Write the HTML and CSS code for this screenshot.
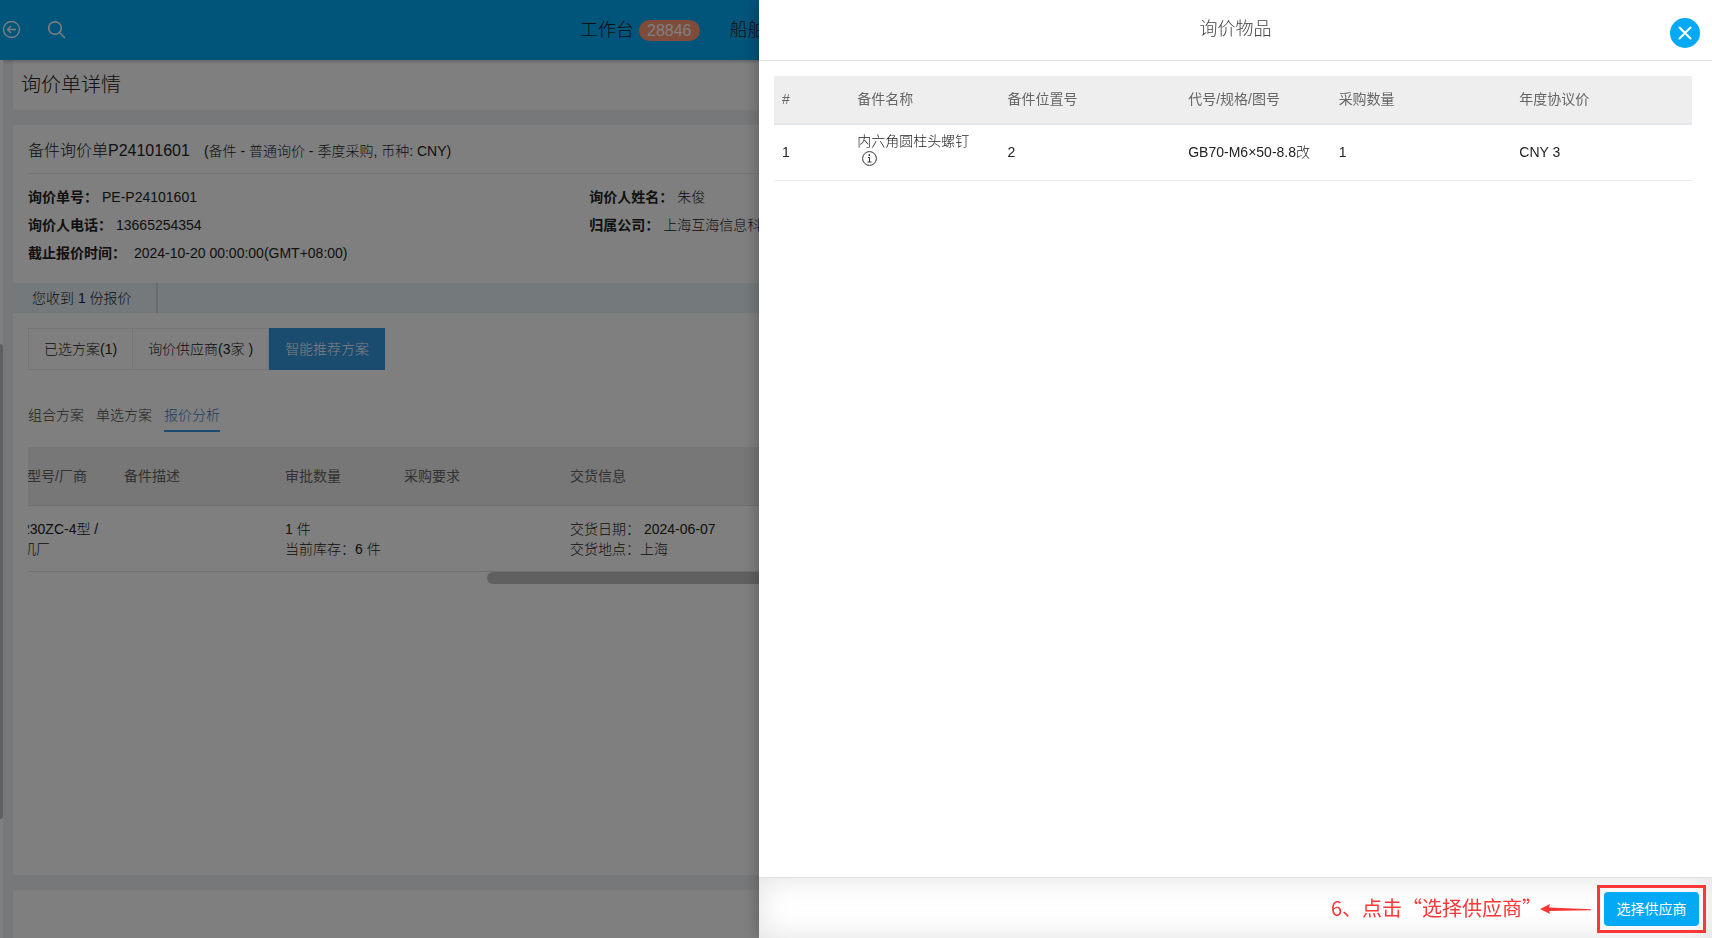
FILE: index.html
```html
<!DOCTYPE html>
<html lang="zh-CN">
<head>
<meta charset="utf-8">
<meta name="viewport" content="width=device-width, initial-scale=1">
<title>询价单详情</title>
<link rel="stylesheet" href="styles.css">
</head>
<body>
<div class="page">
  <header class="topbar">
    <div class="topbar-tools">
      <button class="icon-btn" type="button" aria-label="返回">
        <svg width="18" height="18" viewBox="0 0 18 18" fill="none" stroke="currentColor" stroke-width="1.3"><circle cx="8.500" cy="8.500" r="8"/><path d="M13 8.500H4.500M8 5L4.500 8.500 8 12"/></svg>
      </button>
      <button class="icon-btn" type="button" aria-label="搜索">
        <svg width="18" height="18" viewBox="0 0 18 18" fill="none" stroke="currentColor" stroke-width="1.5"><circle cx="7" cy="7" r="6.300"/><path d="M11.500 11.500l5.500 5.500"/></svg>
      </button>
    </div>
    <nav class="topnav">
      <a class="nav-link" href="#">工作台<span class="badge">28846</span></a>
      <a class="nav-link" href="#">船舶</a>
    </nav>
  </header>

  <div class="body">
    <div class="rail"><div class="rail-thumb"></div></div>
    <main class="main">
      <section class="card title-card"><h1 class="page-title">询价单详情</h1></section>

      <section class="card detail-card">
        <h2 class="order-title">备件询价单P24101601<span class="order-meta">(备件 - 普通询价 - 季度采购, 币种: CNY)</span></h2>
        <dl class="fields">
          <div class="field"><dt>询价单号：</dt><dd>PE-P24101601</dd></div>
          <div class="field"><dt>询价人姓名：</dt><dd>朱俊</dd></div>
          <div class="field"></div>
          <div class="field"><dt>询价人电话：</dt><dd>13665254354</dd></div>
          <div class="field"><dt>归属公司：</dt><dd>上海互海信息科</dd></div>
          <div class="field"></div>
          <div class="field"><dt>截止报价时间：</dt><dd>&nbsp;2024-10-20 00:00:00(GMT+08:00)</dd></div>
        </dl>
        <div class="notice"><p class="notice-text">您收到 <b>1</b> 份报价</p></div>
        <div class="tabs">
          <button class="tab" type="button">已选方案(1)</button>
          <button class="tab" type="button">询价供应商(3家 )</button>
          <button class="tab tab-active" type="button">智能推荐方案</button>
        </div>
        <div class="subtabs">
          <button class="subtab" type="button">组合方案</button>
          <button class="subtab" type="button">单选方案</button>
          <button class="subtab subtab-active" type="button">报价分析</button>
        </div>
        <div class="scroller">
          <table class="analysis">
            <colgroup><col class="a-model"><col class="a-desc"><col class="a-qty"><col class="a-req"><col></colgroup>
            <thead><tr><th>型号/厂商</th><th>备件描述</th><th>审批数量</th><th>采购要求</th><th>交货信息</th></tr></thead>
            <tbody><tr><td>230ZC-4型 /<br>机厂</td><td></td><td>1 件<br>当前库存：6 件</td><td></td><td>交货日期： 2024-06-07<br>交货地点：上海</td></tr></tbody>
          </table>
          <div class="scroll-thumb"></div>
        </div>
      </section>

      <section class="card rest-card"></section>
    </main>
  </div>
</div>

<div class="mask"></div>

<aside class="drawer" role="dialog" aria-labelledby="drawer-title">
  <header class="drawer-head">
    <h2 class="drawer-title" id="drawer-title">询价物品</h2>
    <button class="close" type="button" aria-label="关闭">
      <svg width="14" height="14" viewBox="0 0 14 14" fill="none" stroke="currentColor" stroke-width="2" stroke-linecap="round"><path d="M1.500 1.500l11 11M12.500 1.500l-11 11"/></svg>
    </button>
  </header>
  <div class="drawer-body">
    <table class="items">
      <colgroup><col class="i-no"><col class="i-mid"><col class="i-wide"><col class="i-mid"><col class="i-wide"><col class="i-wide"></colgroup>
      <thead><tr><th>#</th><th>备件名称</th><th>备件位置号</th><th>代号/规格/图号</th><th>采购数量</th><th>年度协议价</th></tr></thead>
      <tbody><tr>
        <td>1</td>
        <td class="item-name">内六角圆柱头螺钉
          <svg class="info" width="15" height="15" viewBox="0 0 15 15" fill="none" stroke="currentColor"><circle cx="7.500" cy="7.500" r="6.900"/><path d="M6 6.500h1.500v4.500M5.500 11h4"/><path d="M7.300 3.300v1.600" stroke-width="1.400"/></svg>
        </td>
        <td>2</td><td>GB70-M6×50-8.8改</td><td>1</td><td>CNY 3</td>
      </tr></tbody>
    </table>
  </div>
  <footer class="drawer-foot">
    <p class="hint">6、点击“选择供应商”</p>
    <svg class="arrow" width="52" height="12" viewBox="0 0 52 12"><path fill="#fd3636" d="M0 6L10 1l-1 3.500L51 6.300v.9L9 8l1 3z"/></svg>
    <div class="highlight"><button class="primary" type="button">选择供应商</button></div>
  </footer>
</aside>
</body>
</html>
```

FILE: styles.css
```css
* { box-sizing: border-box; }

body {
  margin: 0;
  overflow: hidden;
  background: #eff1f4;
  color: #222;
  font-family: "Liberation Sans", "Noto Sans CJK SC", sans-serif;
  font-size: 14px;
  font-weight: 300;
  line-height: 20px;
}

h1, h2, p, dl, dd { margin: 0; font-weight: 300; }
button { border: 0; padding: 0; background: none; color: inherit; font: inherit; }
table { border-collapse: separate; border-spacing: 0; table-layout: fixed; }
th, td { padding: 0 8px 2px; text-align: left; }
th { color: #666; font-weight: 400; }

.page { display: flex; flex-direction: column; height: 100vh; }

.topbar {
  position: relative;
  display: flex;
  align-items: center;
  flex: none;
  height: 60px;
  background: #03a9f4;
  box-shadow: 0 1px 4px rgba(0, 0, 0, .3);
}
.topbar-tools { display: flex; gap: 27px; flex: none; width: 580px; padding-left: 3px; }
.icon-btn { display: flex; color: #fff; }
.topnav { display: flex; gap: 30px; }
.nav-link { display: flex; align-items: center; gap: 5px; color: #222; font-size: 18px; text-decoration: none; white-space: nowrap; }
.badge { padding: 1px 8px 0; border-radius: 11px; background: #ff9878; color: #fff; font-size: 16px; }

.body { display: flex; flex: 1; min-height: 0; }
.rail { position: relative; flex: none; width: 3px; background: #fff; }
.rail-thumb { position: absolute; top: 32.400%; right: 0; width: 3px; height: 54%; border-radius: 0 4px 4px 0; background: #c1c1c1; }
.main { display: flex; flex-direction: column; flex: 1; gap: 15px; min-width: 0; padding-left: 10px; }
.card { background: #fff; }
.title-card { flex: none; padding: 11px 8px; }
.page-title { font-size: 20px; line-height: 28px; }
.detail-card { flex: none; min-height: 80vh; padding-left: 15px; }
.rest-card { flex: 1; }

.order-title { padding: 14px 0 10px; border-bottom: 1px solid #ebebeb; font-size: 16px; line-height: 24px; }
.order-meta { margin-left: 14px; font-size: 14px; }

.fields { display: grid; grid-template-columns: repeat(3, 1fr); padding: 9px 0 16px; }
.field { display: flex; gap: 4px; line-height: 28px; }
.field dt { font-weight: 700; }

.notice { margin-left: -15px; padding-left: 19px; background: #e8f4f9; line-height: 30px; }
.notice-text { width: 126px; border-right: 2px solid #d4d4d4; }

.tabs { display: flex; margin-top: 15px; }
.tab { height: 42px; padding: 0 15px; border: 1px solid #ebebeb; border-left-width: 0; }
.tab:first-child { border-left-width: 1px; }
.tab-active { padding: 0 16px; border: 0; background: #3498e0; color: #fff; }

.subtabs { display: flex; gap: 12px; margin-top: 35px; }
.subtab { padding-bottom: 5px; border-bottom: 2px solid transparent; color: #444; }
.subtab-active { border-color: #3498e0; color: #3a7bd0; }

.scroller { margin-top: 15px; overflow: hidden; }
.analysis { width: 100%; margin-left: -14px; }
.analysis th { height: 59px; padding-bottom: 0; border-bottom: 1px solid #e0e0e0; background: #eee; }
.analysis td { height: 66px; padding-bottom: 0; border-bottom: 1px solid #e0e0e0; white-space: nowrap; }
.analysis th:first-child { padding-left: 13px; }
.a-model { width: 102px; }
.a-desc { width: 161px; }
.a-qty { width: 119px; }
.a-req { width: 166px; }
.scroll-thumb { height: 12px; margin-left: 459px; border-radius: 6px; background: #c1c1c1; }

.mask { position: fixed; inset: 0; background: rgba(0, 0, 0, .5); }

.drawer {
  position: fixed;
  top: 0;
  right: 0;
  bottom: 0;
  left: 759px;
  display: flex;
  flex-direction: column;
  background: #fff;
  box-shadow: 0 0 16px rgba(0, 0, 0, .3);
}
.drawer-head { position: relative; flex: none; height: 61px; border-bottom: 1px solid #e0e0e0; text-align: center; }
.drawer-title { color: #444; font-size: 18px; line-height: 58px; }
.close {
  position: absolute;
  top: 18px;
  right: 12px;
  display: flex;
  align-items: center;
  justify-content: center;
  width: 30px;
  height: 30px;
  border-radius: 50%;
  background: #03a9f4;
  color: #fff;
}
.drawer-body { flex: 1; padding: 15px 20px 0 15px; }
.items { width: 100%; }
.items th { height: 49px; border-bottom: 2px solid #e3e7eb; background: #eee; }
.items td { height: 56px; border-bottom: 1px solid #ebebeb; }
.items .item-name { padding-bottom: 8px; line-height: 20px; }
.i-no { width: 8.200%; }
.i-mid { width: 16.400%; }
.i-wide { width: 19.700%; }
.info { display: block; margin-left: 5px; color: #333; }

.drawer-foot {
  display: flex;
  align-items: center;
  justify-content: flex-end;
  flex: none;
  height: 61px;
  padding: 2px 6px 0 0;
  border-top: 1px solid #e0e0e0;
  box-shadow: inset 0 0 30px rgba(0, 0, 0, .12);
}
.hint { padding-bottom: 3px; color: #fd3636; font-family: "Noto Sans CJK SC", sans-serif; font-size: 20px; font-weight: 400; white-space: nowrap; }
.arrow { margin-right: 5px; margin-left: -2px; }
.highlight { padding: 4px; border: 3px solid #fd3636; }
.primary { display: block; width: 95px; height: 34px; border-radius: 4px; background: #03a9f4; color: #fff; font-weight: 400; }
```
